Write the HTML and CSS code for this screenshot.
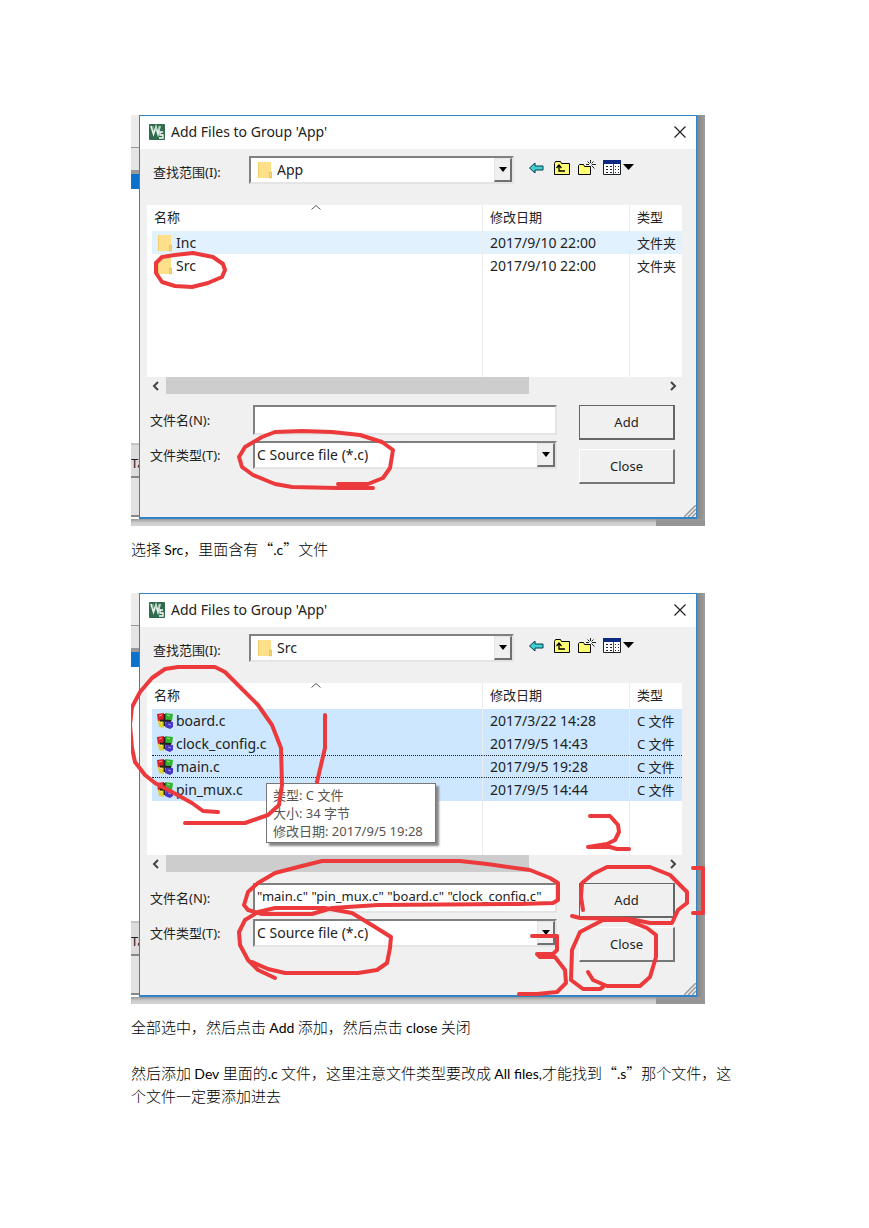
FILE: index.html
```html
<!DOCTYPE html>
<html lang="zh-CN">
<head>
    <meta charset="UTF-8">
    <meta name="viewport" content="width=device-width, initial-scale=1.0">
    <title>Add Files to Group</title>
    <link rel="stylesheet" href="styles.css">
</head>
<body>
    <!-- shared icons -->
    <svg class="sprite" aria-hidden="true">
        <symbol id="logo" viewBox="0 0 16 16">
            <rect width="16" height="16" rx="1" fill="#2f6b4c"/>
            <path d="M2 2l2.500 8L7 3l2 7 2-8" fill="none" stroke="#e4f0e8" stroke-width="1.800"/>
            <path d="M4 2v4M7 2v4M10 2v4" stroke="#9dc4ab"/>
            <path d="M14 8h-3v3h3v3h-4" fill="none" stroke="#fff" stroke-width="1.300"/>
        </symbol>
        <symbol id="folder" viewBox="0 0 16 18">
            <path d="M1 1h13v10l1 1v5H1z" fill="#ffe08a"/>
            <path d="M1 1h1v16H1z" fill="#f3cd6a"/>
            <path d="M12.500 11h2v6h-2z" fill="#f6d578" stroke="#e0b850" stroke-width=".6"/>
        </symbol>
        <symbol id="cfile" viewBox="0 0 18 18">
            <path d="M1 2l7-1v8l-6 1z" fill="#d9202a"/>
            <path d="M9 1l8 1-1 7-7-1z" fill="#35b32f"/>
            <path d="M2 9l6-1v8l-5-1z" fill="#e3cf2e"/>
            <path d="M10 9l7 1v5l-3 2-5-2z" fill="#4a35c4"/>
            <path d="M8.500 2v12M4 8.500l11 .5" stroke="#222" stroke-width="1.800"/>
            <path d="M3 4l3-1M11 3l3 1M4 11l2-1M12 12l3 1" stroke="#fff" stroke-opacity=".5" fill="none"/>
        </symbol>
        <symbol id="back" viewBox="0 0 18 16">
            <path d="M1.500 8L7 3v3h8v4H7v3z" fill="#3fd0d0" stroke="#0b3a4a"/>
        </symbol>
        <symbol id="up" viewBox="0 0 18 16">
            <path d="M1.500 14.500v-11l1-2h5l1 2h8v11z" fill="#ffff73" stroke="#000"/>
            <path d="M6 6v5h6M3.500 8L6 5l2.500 3" fill="none" stroke="#000" stroke-width="1.300"/>
        </symbol>
        <symbol id="new" viewBox="0 0 18 16">
            <path d="M.500 14.500v-9l1-1h4l1 2h6v8z" fill="#ffff73" stroke="#000"/>
            <path d="M12.500 0v3M12.500 6v3M8 4.500h3M14 4.500h4M9.500 1.500l2 2M15.500 1.500l-2 2M13.500 5.500l3 3" stroke="#222"/>
        </symbol>
        <symbol id="views" viewBox="0 0 32 16">
            <path d="M.500.500h17v14H.500z" fill="#fff" stroke="#222"/>
            <path d="M0 0h18v4H0z" fill="#0c2a80"/>
            <path d="M3 6.500h2M7 6.500h2M12 6.500h1M15 6.500h1M3 9.500h2M7 9.500h2M12 9.500h1M15 9.500h1M3 12.500h2M7 12.500h2M12 12.500h1M15 12.500h1" stroke="#123"/>
            <path d="M10.500 4v10" stroke="#555"/>
            <path d="M20 4h11l-5.500 6z"/>
        </symbol>
        <symbol id="drop" viewBox="0 0 8 5"><path d="M0 0h8L4 5z"/></symbol>
        <symbol id="left" viewBox="0 0 8 10"><path d="M6 1L2 5l4 4" fill="none" stroke="#444" stroke-width="2"/></symbol>
        <symbol id="right" viewBox="0 0 8 10"><path d="M2 1l4 4-4 4" fill="none" stroke="#444" stroke-width="2"/></symbol>
        <symbol id="sort" viewBox="0 0 10 5"><path d="M.500 4.500l4.500-4 4.500 4" fill="none" stroke="#555"/></symbol>
        <symbol id="close" viewBox="0 0 12 12"><path d="M.500.500l11 11M11.500.500l-11 11" stroke="#222" stroke-width="1.200"/></symbol>
        <symbol id="grip" viewBox="0 0 12 12"><path d="M0 12L12 0M4 12l8-8M8 12l4-4" stroke="#999" stroke-width="1.500"/></symbol>
    </svg>

    <main class="page">
        <section class="shot">
            <div class="behind-left"><span class="toolbar-edge"></span><span class="blue-edge"></span><span class="tab-edge">Ta</span><span class="status-edge"></span></div>
            <div class="dialog">
                <header class="titlebar">
                    <svg class="logo"><use href="#logo"/></svg>
                    <h2>Add Files to Group 'App'</h2>
                    <button class="close-btn" aria-label="Close window"><svg><use href="#close"/></svg></button>
                </header>
                <div class="dialog-body">
                    <div class="look-in">
                        <label for="lookin1">查找范围(I):</label>
                        <div class="combo">
                            <svg class="folder"><use href="#folder"/></svg>
                            <select id="lookin1"><option>App</option></select>
                            <span class="arrow"><svg><use href="#drop"/></svg></span>
                        </div>
                        <div class="tools">
                            <button aria-label="Back"><svg><use href="#back"/></svg></button>
                            <button aria-label="Up one level"><svg><use href="#up"/></svg></button>
                            <button aria-label="New folder"><svg><use href="#new"/></svg></button>
                            <button class="wide" aria-label="Views"><svg><use href="#views"/></svg></button>
                        </div>
                    </div>
                    <div class="list">
                        <table>
                            <thead>
                                <tr><th class="name"><svg class="sort"><use href="#sort"/></svg>名称</th><th class="date">修改日期</th><th class="type">类型</th></tr>
                            </thead>
                            <tbody>
                                <tr class="hover"><td><span class="file"><svg class="folder"><use href="#folder"/></svg>Inc</span></td><td>2017/9/10 22:00</td><td class="kind">文件夹</td></tr>
                                <tr><td><span class="file"><svg class="folder"><use href="#folder"/></svg>Src</span></td><td>2017/9/10 22:00</td><td class="kind">文件夹</td></tr>
                                <tr class="filler"><td></td><td></td><td></td></tr>
                            </tbody>
                        </table>
                    </div>
                    <div class="scrollbar">
                        <svg><use href="#left"/></svg>
                        <div class="track"><div class="thumb"></div></div>
                        <svg><use href="#right"/></svg>
                    </div>
                    <div class="bottom">
                        <div class="fields">
                            <label for="name1">文件名(N):</label>
                            <input type="text" id="name1" value="">
                            <label for="type1">文件类型(T):</label>
                            <div class="combo">
                                <select id="type1"><option>C Source file (*.c)</option></select>
                                <span class="arrow"><svg><use href="#drop"/></svg></span>
                            </div>
                        </div>
                        <div class="buttons">
                            <button class="btn default">Add</button>
                            <button class="btn">Close</button>
                        </div>
                    </div>
                </div>
                <svg class="grip"><use href="#grip"/></svg>
            </div>
            <div class="behind-right"></div>
            <div class="behind-bottom"></div>
            <svg class="marks" viewBox="0 0 574 411" aria-hidden="true">
                <path d="M62 138L44 140 31 142 25 148 25 158 31 167 44 171 61 172 77 168 91 162 94 155 92 149 82 142 62 138"/>
                <path d="M207 369L237 369 252 363 259 353 262 335 251 327 229 320 201 317 171 316 144 317 131 322 114 332 108 342 111 352 122 360 144 369 161 372 207 373 242 373"/>
            </svg>
        </section>
        <p class="caption">选择 <span class="latin">Src</span>，里面含有“<span class="latin">.c</span>”文件</p>

        <section class="shot second">
            <div class="behind-left"><span class="toolbar-edge"></span><span class="blue-edge"></span><span class="tab-edge">Ta</span><span class="status-edge"></span></div>
            <div class="dialog">
                <header class="titlebar">
                    <svg class="logo"><use href="#logo"/></svg>
                    <h2>Add Files to Group 'App'</h2>
                    <button class="close-btn" aria-label="Close window"><svg><use href="#close"/></svg></button>
                </header>
                <div class="dialog-body">
                    <div class="look-in">
                        <label for="lookin2">查找范围(I):</label>
                        <div class="combo">
                            <svg class="folder"><use href="#folder"/></svg>
                            <select id="lookin2"><option>Src</option></select>
                            <span class="arrow"><svg><use href="#drop"/></svg></span>
                        </div>
                        <div class="tools">
                            <button aria-label="Back"><svg><use href="#back"/></svg></button>
                            <button aria-label="Up one level"><svg><use href="#up"/></svg></button>
                            <button aria-label="New folder"><svg><use href="#new"/></svg></button>
                            <button class="wide" aria-label="Views"><svg><use href="#views"/></svg></button>
                        </div>
                    </div>
                    <div class="list">
                        <table>
                            <thead>
                                <tr><th class="name"><svg class="sort"><use href="#sort"/></svg>名称</th><th class="date">修改日期</th><th class="type">类型</th></tr>
                            </thead>
                            <tbody>
                                <tr class="selected"><td><span class="file"><svg class="cfile"><use href="#cfile"/></svg>board.c</span></td><td>2017/3/22 14:28</td><td class="kind">C 文件</td></tr>
                                <tr class="selected"><td><span class="file"><svg class="cfile"><use href="#cfile"/></svg>clock_config.c</span></td><td>2017/9/5 14:43</td><td class="kind">C 文件</td></tr>
                                <tr class="selected focused"><td><span class="file"><svg class="cfile"><use href="#cfile"/></svg>main.c</span></td><td>2017/9/5 19:28</td><td class="kind">C 文件</td></tr>
                                <tr class="selected"><td><span class="file"><svg class="cfile"><use href="#cfile"/></svg>pin_mux.c</span></td><td>2017/9/5 14:44</td><td class="kind">C 文件</td></tr>
                                <tr class="filler"><td></td><td></td><td></td></tr>
                            </tbody>
                        </table>
                    </div>
                    <div class="scrollbar">
                        <svg><use href="#left"/></svg>
                        <div class="track"><div class="thumb"></div></div>
                        <svg><use href="#right"/></svg>
                    </div>
                    <div class="bottom">
                        <div class="fields">
                            <label for="name2">文件名(N):</label>
                            <input type="text" id="name2" value='"main.c" "pin_mux.c" "board.c" "clock_config.c"'>
                            <label for="type2">文件类型(T):</label>
                            <div class="combo">
                                <select id="type2"><option>C Source file (*.c)</option></select>
                                <span class="arrow"><svg><use href="#drop"/></svg></span>
                            </div>
                        </div>
                        <div class="buttons">
                            <button class="btn default">Add</button>
                            <button class="btn">Close</button>
                        </div>
                    </div>
                </div>
                <svg class="grip"><use href="#grip"/></svg>
            </div>
            <div class="behind-right"></div>
            <div class="behind-bottom"></div>
            <div class="tooltip">类型: C 文件<br>大小: 34 字节<br>修改日期: 2017/9/5 19:28</div>
            <svg class="marks" viewBox="0 0 574 411" aria-hidden="true">
                <path d="M87 219L72 218 61 210 41 199 24 190 14 182 4 169 1 155 -1 132 1 114 9 99 21 85 34 76 47 74 84 74 94 79 107 92 127 112 141 132 150 155 151 192 148 212 137 222 114 230 54 230"/>
                <path d="M194 122L194 155 186 189"/>
                <path d="M329 268L191 268 167 274 144 280 127 290 117 299 113 312 117 317 131 321 181 321 201 315 247 312 389 311 422 310 427 307 427 290 419 285 399 277 356 271 329 268"/>
                <path d="M144 385L127 377 117 367 109 352 108 339 114 327 127 319 144 315 194 315 221 320 244 334 260 344 259 355 256 370 246 377 227 380 154 380 137 376 121 369"/>
                <path d="M459 223L479 223 487 232 488 239 484 247 476 251 457 254 479 254 486 256 498 256"/>
                <path d="M452 317L450 304 451 290 462 281 476 274 519 274 539 282 556 299 556 310 547 317 541 330 519 330 499 326 449 325 441 323"/>
                <path d="M562 275L572 275 572 320 562 320"/>
                <path d="M457 379L462 387 476 393 509 393 519 384 525 364 525 342 516 335 496 327 472 327 449 339 441 357 440 387 452 396 469 396 472 394"/>
                <path d="M401 343L426 343 426 357 422 361 406 361 409 364 424 364 434 377 435 390 426 399 406 401 388 401"/>
            </svg>
        </section>
        <p class="caption">全部选中，然后点击 <span class="latin">Add</span> 添加，然后点击 <span class="latin">close</span> 关闭</p>

        <p class="note">然后添加 <span class="latin">Dev</span> 里面的<span class="latin">.c</span> 文件，这里注意文件类型要改成 <span class="latin">All files,</span>才能找到“<span class="latin">.s</span>”那个文件，这个文件一定要添加进去</p>
    </main>
</body>
</html>
```

FILE: styles.css
```css
* { box-sizing: border-box; margin: 0; padding: 0; }
body {
    background: #fff;
    color: #000;
    font-family: "Noto Sans CJK SC", sans-serif;
    font-size: 15px;
    font-weight: 300;
    line-height: 23px;
}
.sprite {
    position: absolute;
    width: 0;
    height: 0;
}
.page {
    max-width: 869px;
    padding: 115px 131px;
}
.latin {
    font-family: Lato, sans-serif;
    font-size: 14px;
    font-weight: 400;
    line-height: 1;
}
.caption {
    margin-top: 11px;
}
.note {
    margin-top: 23px;
}

/* screenshot frame with the window behind it */
.shot {
    position: relative;
    display: grid;
    grid-template-columns: 8px 1fr 8px;
    grid-template-rows: auto 7px;
    max-width: 574px;
    overflow: hidden;
    color: #222;
    font-family: "Noto Sans", "Noto Sans CJK SC", sans-serif;
    font-size: 13px;
    font-weight: 400;
    line-height: 18px;
}
.second {
    margin-top: 33px;
}
.behind-left {
    display: flex;
    flex-direction: column;
    background: #fff;
    overflow: hidden;
}
.toolbar-edge {
    height: 59px;
    background: linear-gradient(#ececec 32px, #999 32px, #999 33px, #e4e4e4 33px, #e4e4e4 55px, #999 55px);
}
.blue-edge {
    height: 15px;
    background: #0a72cc;
}
.tab-edge {
    height: 35px;
    margin-top: 254px;
    padding-top: 9px;
    background: #dcdcdc;
    border-top: 2px solid #c4c4c4;
    border-bottom: 2px solid #888;
    font-size: 13px;
}
.status-edge {
    flex: 1;
    margin-bottom: 2px;
    background: #e4e2e0;
    border-bottom: 2px solid #888;
}
.behind-right {
    background: linear-gradient(90deg, #858585, #9e9e9e);
}
.behind-bottom {
    grid-column: 1 / -1;
    background: linear-gradient(90deg, #d2d2d2 525px, #959595 525px);
    box-shadow: inset 0 3px 3px -1px #999;
}

/* dialog */
.dialog {
    position: relative;
    background: #f0f0f0;
    border: 1px solid #2f83c6;
    border-bottom-width: 2px;
}
.titlebar {
    display: flex;
    align-items: center;
    height: 33px;
    padding: 0 10px 2px 9px;
    background: #fff;
}
.logo {
    width: 16px;
    height: 16px;
    margin-right: 6px;
}
.titlebar h2 {
    flex: 1;
    font-size: 14px;
    font-weight: 400;
}
.close-btn, .tools button {
    display: flex;
    background: none;
    border: none;
}
.close-btn svg {
    width: 12px;
    height: 12px;
}
.dialog-body {
    padding: 7px 14px 33px 7px;
}
.look-in {
    display: grid;
    grid-template-columns: 96px 265px 1fr;
    align-items: center;
    margin: 0 0 21px 6px;
}
.look-in label {
    padding-top: 4px;
}
.combo {
    display: flex;
    align-items: center;
    height: 28px;
    background: #fff;
    border: 2px solid #808080;
    border-right-color: #e4e4e4;
    border-bottom-color: #e4e4e4;
}
.combo select {
    flex: 1;
    min-width: 0;
    appearance: none;
    background: none;
    border: none;
    color: #222;
    font: inherit;
    font-size: 14px;
    padding-left: 2px;
}
.look-in .folder {
    margin: 0 2px 0 6px;
}
.folder {
    width: 16px;
    height: 18px;
}
.arrow {
    display: flex;
    align-items: center;
    justify-content: center;
    align-self: stretch;
    width: 18px;
    background: #f0f0f0;
    border: 1px solid #e4e4e4;
    border-right: 2px solid #707070;
    border-bottom: 2px solid #707070;
}
.arrow svg {
    width: 8px;
    height: 5px;
}
.tools {
    display: flex;
    gap: 7px;
    padding: 0 0 4px 14px;
}
.tools svg {
    width: 18px;
    height: 16px;
}
.tools .wide svg {
    width: 32px;
}

/* file list */
.list {
    height: 172px;
    background: #fff;
}
.list table {
    width: 100%;
    height: 100%;
    border-collapse: separate;
    border-spacing: 0;
    table-layout: fixed;
}
.list th {
    height: 26px;
    padding-bottom: 2px;
    font-weight: 400;
    text-align: left;
}
.list th.name {
    position: relative;
    padding-left: 7px;
}
.date {
    width: 147px;
}
.type {
    width: 53px;
}
.list td {
    height: 23px;
    font-size: 14px;
    white-space: nowrap;
}
.list .kind {
    font-size: 13px;
}
.list td + td, .list th + th {
    padding-left: 7px;
    border-left: 1px solid #ececec;
}
.list .filler td {
    height: auto;
}
.sort {
    position: absolute;
    top: 0;
    left: 49%;
    width: 10px;
    height: 5px;
}
.file {
    display: flex;
    align-items: center;
    height: 23px;
    margin-left: 5px;
    padding-left: 5px;
}
.file svg {
    margin-right: 3px;
}
.file .cfile {
    width: 18px;
    height: 18px;
    margin: 0 2px 0 -1px;
}
.hover .file, .hover td + td {
    background: #e2f1fe;
}
.selected .file, .selected td + td {
    background: #cce7ff;
}
.focused .file, .focused td + td {
    border-top: 1px dotted #222;
    border-bottom: 1px dotted #222;
}
.scrollbar {
    display: flex;
    align-items: center;
    height: 17px;
    padding: 0 5px;
}
.scrollbar svg {
    width: 8px;
    height: 10px;
}
.track {
    flex: 1;
    height: 17px;
    margin: 0 6px;
}
.thumb {
    width: 73%;
    height: 100%;
    background: #cdcdcd;
}

/* file name, type and buttons */
.bottom {
    display: flex;
    gap: 22px;
    padding: 11px 7px 0 3px;
}
.fields {
    flex: 1;
    display: grid;
    grid-template-columns: 103px 1fr;
    grid-template-rows: 30px 28px;
    row-gap: 6px;
    align-items: center;
}
.fields input {
    width: 100%;
    height: 30px;
    padding: 0 2px 4px;
    background: #fff;
    border: 2px solid #808080;
    border-right-color: #e4e4e4;
    border-bottom-color: #e4e4e4;
    color: #222;
    font: inherit;
}
.buttons {
    display: flex;
    flex-direction: column;
    gap: 9px;
    width: 96px;
}
.btn {
    height: 35px;
    background: #f0f0f0;
    border: 1px solid #fff;
    border-right: 2px solid #777;
    border-bottom: 2px solid #777;
    color: #222;
    font: inherit;
}
.btn.default {
    border-color: #666;
}
.grip {
    position: absolute;
    right: 0;
    bottom: 0;
    width: 12px;
    height: 12px;
}
.tooltip {
    position: absolute;
    top: 190px;
    left: 135px;
    padding: 2px 12px 2px 6px;
    background: #fff;
    border: 1px solid #777;
    box-shadow: 3px 3px 2px #888;
    color: #555;
    white-space: nowrap;
}

/* hand drawn red pen strokes */
.marks {
    position: absolute;
    top: 0;
    left: 0;
    width: 100%;
    pointer-events: none;
}
.marks path {
    fill: none;
    stroke: #ec3a3c;
    stroke-width: 4;
    stroke-linecap: round;
    stroke-linejoin: round;
}
```
